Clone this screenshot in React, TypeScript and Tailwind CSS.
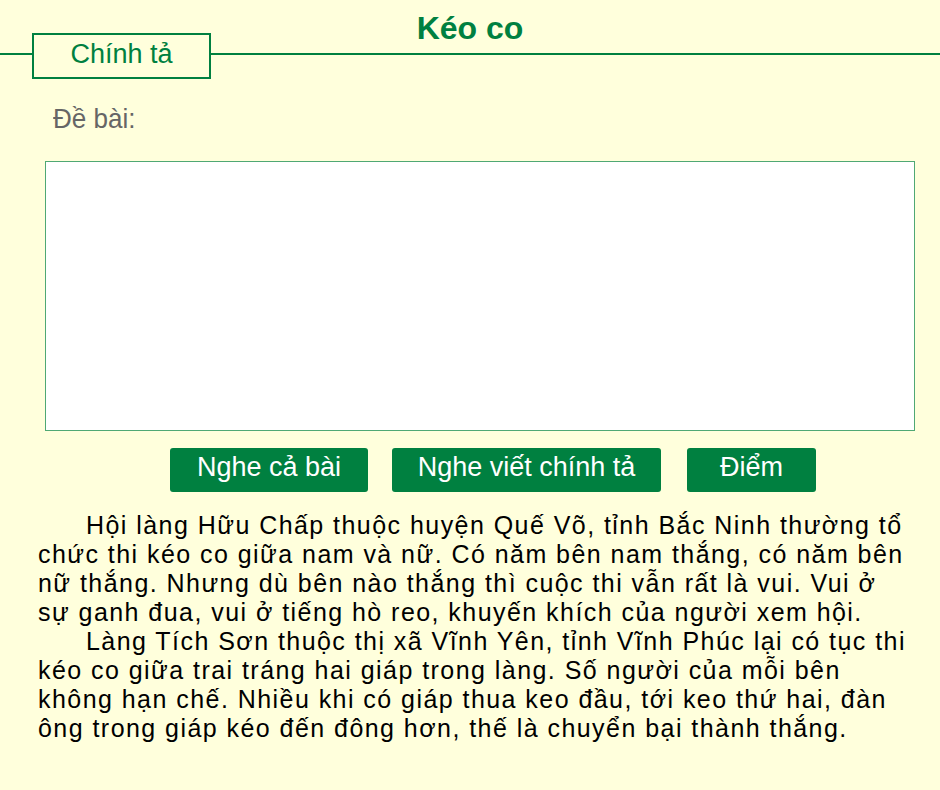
import { useState } from 'react'

const GREEN = 'bg-[#008040]'

const paragraphs = [
  'Hội làng Hữu Chấp thuộc huyện Quế Võ, tỉnh Bắc Ninh thường tổ chức thi kéo co giữa nam và nữ. Có năm bên nam thắng, có năm bên nữ thắng. Nhưng dù bên nào thắng thì cuộc thi vẫn rất là vui. Vui ở sự ganh đua, vui ở tiếng hò reo, khuyến khích của người xem hội.',
  'Làng Tích Sơn thuộc thị xã Vĩnh Yên, tỉnh Vĩnh Phúc lại có tục thi kéo co giữa trai tráng hai giáp trong làng. Số người của mỗi bên không hạn chế. Nhiều khi có giáp thua keo đầu, tới keo thứ hai, đàn ông trong giáp kéo đến đông hơn, thế là chuyển bại thành thắng.',
]

function ActionButton({ label, width, className = '' }: { label: string; width: string; className?: string }) {
  return (
    <button
      className={`${GREEN} ${width} ${className} h-[44px] rounded-[3px] text-white text-[27px] leading-none pb-[6px] flex items-center justify-center`}
    >
      {label}
    </button>
  )
}

export default function App() {
  const [answer, setAnswer] = useState('')

  return (
    <div className="min-h-screen bg-[#ffffdc] font-['Liberation_Sans',Arial,sans-serif] pb-8">
      {/* header: title stacked over the ruled line with the section box */}
      <div className="grid">
        <div className="col-start-1 row-start-1 flex items-start mt-[33px]">
          <div className="w-[32px] h-[2px] mt-[20px] bg-[#008040]" />
          <div className="w-[179px] h-[46px] border-2 border-[#008040] flex items-center justify-center text-[#008040] text-[27px] leading-none pb-[3px]">
            Chính tả
          </div>
          <div className="flex-1 h-[2px] mt-[20px] bg-[#008040]" />
        </div>
        <h1 className="col-start-1 row-start-1 self-start text-center pt-[12px] text-[32px] leading-none font-bold text-[#008040]">
          Kéo co
        </h1>
      </div>

      <div className="pl-[53px] pt-[26px]">
        <span className="inline-block origin-left scale-x-[0.93] text-[28px] leading-none text-[#666666]">Đề bài:</span>
      </div>

      <textarea
        value={answer}
        onChange={(e) => setAnswer(e.target.value)}
        className="block ml-[45px] mt-[26px] w-[870px] h-[270px] bg-white border border-[#4fa874] outline-none resize-none p-2 text-[22px]"
      />

      <div className="flex pl-[170px] mt-[17px] gap-[24px]">
        <ActionButton label="Nghe cả bài" width="w-[198px]" />
        <ActionButton label="Nghe viết chính tả" width="w-[269px]" />
        <ActionButton label="Điểm" width="w-[129px]" className="ml-[2px]" />
      </div>

      <div className="ml-[38px] mt-[19px] w-[872px] text-[25px] leading-[29px] tracking-[1.45px] text-black">
        {paragraphs.map((p, i) => (
          <p key={i} className="indent-[48px]">
            {p}
          </p>
        ))}
      </div>
    </div>
  )
}
